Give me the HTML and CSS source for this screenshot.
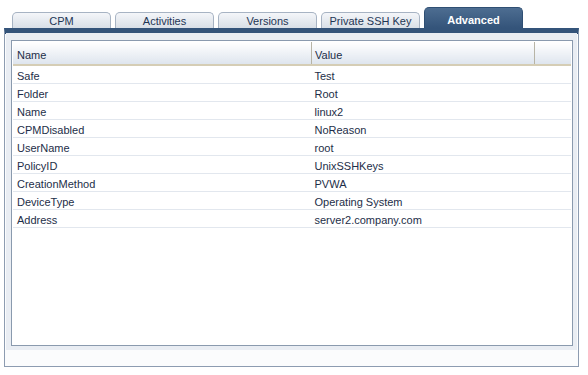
FILE: index.html
```html
<!DOCTYPE html>
<html lang="en">
  <head>
    <meta charset="utf-8" />
    <title>Account Details</title>
    <link rel="stylesheet" href="styles.css">
  </head>
  <body>
    <div class="main">
      <div class="tabs">
        <div class="tab">CPM</div>
        <div class="tab">Activities</div>
        <div class="tab">Versions</div>
        <div class="tab">Private SSH Key</div>
        <div class="tab active">Advanced</div>
      </div>
      <div class="panel">
        <div class="panel-body">
          <div class="grid-box">
            <table class="general-table">
              <thead>
                <tr>
                  <th class="col-name">Name</th>
                  <th class="col-value">Value</th>
                  <th class="col-rest"></th>
                </tr>
              </thead>
              <tbody>
                <tr><td>Safe</td><td>Test</td><td></td></tr>
                <tr><td>Folder</td><td>Root</td><td></td></tr>
                <tr><td>Name</td><td>linux2</td><td></td></tr>
                <tr><td>CPMDisabled</td><td>NoReason</td><td></td></tr>
                <tr><td>UserName</td><td>root</td><td></td></tr>
                <tr><td>PolicyID</td><td>UnixSSHKeys</td><td></td></tr>
                <tr><td>CreationMethod</td><td>PVWA</td><td></td></tr>
                <tr><td>DeviceType</td><td>Operating System</td><td></td></tr>
                <tr><td>Address</td><td>server2.company.com</td><td></td></tr>
              </tbody>
            </table>
          </div>
        </div>
      </div>
    </div>
  </body>
</html>
```

FILE: styles.css
```css
body {
  margin: 0;
  background-color: white;
  font-family: "Liberation Sans", Arial, sans-serif;
  font-size: 11px;
  color: #1d2e48;
}
.main {
  width: 575px;
  margin-left: 4px;
}
.tabs {
  display: flex;
  align-items: flex-end;
  gap: 4px;
  height: 21px;
  padding: 7px 0 0 8px;
}
.tab {
  box-sizing: border-box;
  width: 99px;
  height: 16px;
  line-height: 16px;
  text-align: center;
  color: #1e3554;
  border: 1px solid #a7b3c3;
  border-bottom: none;
  border-radius: 5px 5px 0 0;
  background: linear-gradient(#f4f6f9, #d9dfe7);
}
.tab.active {
  height: 21px;
  line-height: 24px;
  color: white;
  font-weight: bold;
  border-color: #2f4f73;
  background: linear-gradient(#4d6d91, #34547a);
}
.panel {
  border: 1px solid #8d9cb1;
  border-top: 5px solid #34547a;
  box-shadow: inset 0 1px 0 #27466b;
  padding: 0 1px 16px 1px;
  background-color: #fbfcfd;
}
.panel-body {
  background-color: #e9edf3;
  padding: 7px 4px 4px 5px;
}
.grid-box {
  height: 302px;
  border: 1px solid #8a9aae;
  background-color: white;
  padding: 1px;
}
.general-table {
  width: 100%;
  border-collapse: collapse;
}
th {
  height: 19px;
  padding: 3px 0 0 4px;
  text-align: left;
  font-weight: normal;
  background: linear-gradient(#ffffff, #dee5ee);
  border-bottom: 2px solid #d5cdb5;
}
.col-name {
  width: 294px;
  border-right: 1px solid #b7b4a6;
}
.col-value {
  width: 219px;
  padding-left: 3px;
  border-right: 1px solid #b7b4a6;
}
td {
  height: 15px;
  padding: 2px 0 0 4px;
  border-bottom: 1px solid #e2e7ee;
}
td + td {
  padding-left: 3px;
}
```
